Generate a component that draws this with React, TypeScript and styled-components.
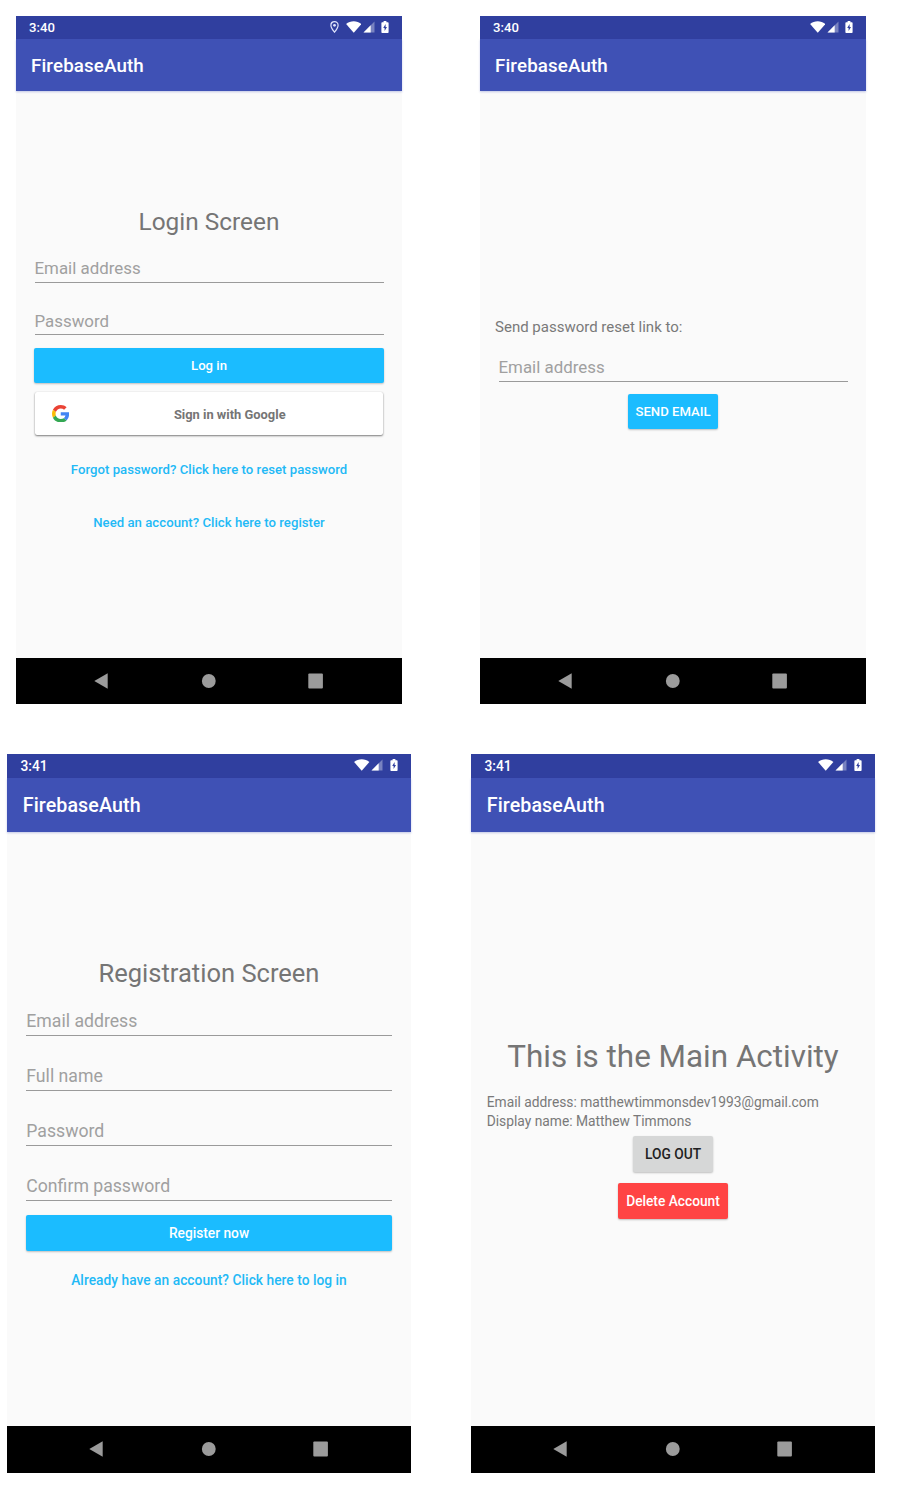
import React from "react";
import styled, { createGlobalStyle, css } from "styled-components";

const GlobalStyle = createGlobalStyle`
  * { box-sizing: border-box; }
  html, body { margin: 0; background: #fff; }
  body { font-family: Roboto, "Liberation Sans", sans-serif; }
`;

const Page = styled.main`
  width: 898px;
  height: 1493px;
  padding-top: 16px;
  overflow: hidden;
  background: #fff;
`;

const Row = styled.div<{ $left: number; $gap: number; $top?: number }>`
  display: flex;
  gap: ${(p) => p.$gap}px;
  padding-left: ${(p) => p.$left}px;
  margin-top: ${(p) => p.$top ?? 0}px;
`;

type Size = "small" | "large";

const dims = {
  small: { dp: 0.9385, width: 386, height: 687.5, status: 23, bar: 52, nav: 45.2, navGap: 107, edge: 13 },
  large: { dp: 0.982, width: 404, height: 718.7, status: 23.5, bar: 54.5, nav: 46.7, navGap: 112, edge: 13.5 },
};

const Device = styled.section<{ $size: Size }>`
  --dp: ${(p) => dims[p.$size].dp}px;
  display: flex;
  flex-direction: column;
  width: ${(p) => dims[p.$size].width}px;
  height: ${(p) => dims[p.$size].height}px;
  background: #fafafa;
`;

const StatusBar = styled.div<{ $size: Size }>`
  flex: none;
  display: flex;
  align-items: center;
  justify-content: space-between;
  height: ${(p) => dims[p.$size].status}px;
  padding: 0 ${(p) => dims[p.$size].edge}px;
  background: #303f9f;
  color: #fff;
  font-size: calc(14 * var(--dp));
  font-weight: 500;
`;

const StatusIcons = styled.div`
  display: flex;
  align-items: center;
  padding-bottom: 1px;
`;

const Glyph = styled.svg<{ $w: number; $h: number; $ml?: number }>`
  display: block;
  width: ${(p) => p.$w}px;
  height: ${(p) => p.$h}px;
  margin-left: ${(p) => p.$ml ?? 0}px;
`;

const AppBar = styled.header<{ $size: Size }>`
  flex: none;
  display: flex;
  align-items: center;
  height: ${(p) => dims[p.$size].bar}px;
  padding-top: 2px;
  padding-left: calc(16 * var(--dp));
  background: #3f51b5;
  color: #fff;
  font-size: calc(20 * var(--dp));
  font-weight: 500;
  letter-spacing: 0.12px;
  box-shadow: 0 1px 2px rgba(63, 81, 181, 0.3);
`;

const Body = styled.div`
  flex: 1;
  min-height: 0;
  display: flex;
  flex-direction: column;
`;

const NavBar = styled.nav<{ $size: Size }>`
  flex: none;
  display: flex;
  align-items: center;
  justify-content: center;
  height: ${(p) => dims[p.$size].nav}px;
  background: #000;
`;

const NavSlot = styled.span<{ $size: Size }>`
  display: flex;
  justify-content: center;
  width: ${(p) => dims[p.$size].navGap}px;
`;

const Heading = styled.h1<{ $top: number; $sp: number; $h: number }>`
  margin: ${(p) => p.$top}px 0 0;
  height: ${(p) => p.$h}px;
  line-height: ${(p) => p.$h}px;
  font-size: calc(${(p) => p.$sp} * var(--dp));
  font-weight: 400;
  text-align: center;
  white-space: nowrap;
  color: #757575;
`;

const Field = styled.div<{ $top: number; $h: number; $left?: number; $right?: number }>`
  margin: ${(p) => p.$top}px ${(p) => p.$right ?? 18.5}px 0 ${(p) => p.$left ?? 18.5}px;
  height: ${(p) => p.$h}px;
  padding-top: 2px;
  line-height: 20px;
  border-bottom: 1.5px solid #9a9a9a;
  font-size: calc(18 * var(--dp));
  color: #a0a0a0;
`;

const Caption = styled.p<{ $top: number; $sp: number; $h: number }>`
  margin: ${(p) => p.$top}px 0 0 calc(16 * var(--dp));
  height: ${(p) => p.$h}px;
  line-height: ${(p) => p.$h}px;
  font-size: calc(${(p) => p.$sp} * var(--dp));
  white-space: nowrap;
  color: #797979;
`;

const tones = {
  primary: css`background: #1bbcff; color: #fff;`,
  neutral: css`background: #d6d7d7; color: #212121;`,
  danger: css`background: #ff4444; color: #fff;`,
};

const Button = styled.button<{ $tone: keyof typeof tones; $top: number; $h: number; $w: number }>`
  display: flex;
  align-items: center;
  justify-content: center;
  align-self: center;
  flex: none;
  margin: ${(p) => p.$top}px 0 0;
  padding: 0;
  width: ${(p) => p.$w}px;
  height: ${(p) => p.$h}px;
  border: 0;
  border-radius: 2px;
  font: 500 calc(14 * var(--dp)) Roboto, sans-serif;
  white-space: nowrap;
  box-shadow: 0 1px 2px rgba(0, 0, 0, 0.24);
  ${(p) => tones[p.$tone]}
`;

const GoogleButton = styled.button`
  display: flex;
  align-items: center;
  align-self: center;
  flex: none;
  width: 348px;
  height: 43px;
  margin: 9.5px 0 0;
  padding: 0 8px 0 16.5px;
  border: 0;
  border-radius: 2px;
  background: #fff;
  color: #757575;
  font: 700 12.9px Roboto, sans-serif;
  box-shadow: 0 1px 2px rgba(0, 0, 0, 0.5), 0 0 1px rgba(0, 0, 0, 0.15);
`;

const GoogleLabel = styled.span`
  flex: 1;
  padding: 2px 0 0 15.5px;
  text-align: center;
`;

const TextLink = styled.a<{ $top: number }>`
  display: block;
  margin-top: ${(p) => p.$top}px;
  height: 18px;
  line-height: 18px;
  font-size: calc(14 * var(--dp));
  font-weight: 500;
  letter-spacing: 0.04px;
  text-align: center;
  white-space: nowrap;
  color: #22b9f6;
`;

const PinIcon = () => (
  <Glyph $w={9} $h={12} viewBox="0 0 9 12">
    <path d="M4.5.7C2.4.7.9 2.2.9 4.2c0 2.5 3.6 7 3.6 7s3.6-4.5 3.6-7C8.1 2.200 6.600.7 4.500.7Z" fill="none" stroke="#dfe3fb" strokeWidth="1.200" />
    <circle cx="4.500" cy="4.300" r="1.400" fill="#dfe3fb" />
  </Glyph>
);

const WifiIcon = ({ ml = 0 }: { ml?: number }) => (
  <Glyph $w={15.5} $h={12} $ml={ml} viewBox="0 0 15.5 12">
    <path d="M.1 3.100C2.200 1.300 4.800.3 7.750.3s5.500 1 7.600 2.800L7.750 11.800Z" fill="#fff" />
  </Glyph>
);

const SignalIcon = () => (
  <Glyph $w={12} $h={12} $ml={1.5} viewBox="0 0 12 12">
    <path d="M11.500.5V11.500H.5Z" fill="#fff" opacity=".35" />
    <path d="M7.700 4.300v7.200H.5Z" fill="#fff" />
  </Glyph>
);

const BatteryIcon = () => (
  <Glyph $w={8} $h={12} $ml={6.5} viewBox="0 0 8 12">
    <path d="M2.600 0h2.800v1.200h1.400q.8 0 .8.8v9.200q0 .8-.8.8H1.200q-.8 0-.8-.8V2q0-.8.8-.8h1.400Z" fill="#fff" />
    <path d="M4.600 3 2.200 7h1.400v3L6 6H4.600Z" fill="#303f9f" />
  </Glyph>
);

const GoogleIcon = () => (
  <Glyph $w={17.5} $h={17.5} viewBox="0 0 48 48">
    <path fill="#EA4335" d="M24 9.500c3.540 0 6.710 1.220 9.210 3.600l6.850-6.850C35.900 2.380 30.470 0 24 0 14.620 0 6.510 5.380 2.560 13.220l7.980 6.190C12.430 13.720 17.740 9.500 24 9.500z" />
    <path fill="#4285F4" d="M46.980 24.550c0-1.570-.15-3.090-.38-4.550H24v9.020h12.940c-.58 2.960-2.260 5.480-4.780 7.180l7.730 6c4.510-4.180 7.090-10.360 7.090-17.650z" />
    <path fill="#FBBC05" d="M10.530 28.590c-.48-1.450-.76-2.990-.76-4.590s.27-3.140.76-4.590l-7.980-6.190C.92 16.460 0 20.120 0 24c0 3.880.92 7.540 2.560 10.780l7.970-6.190z" />
    <path fill="#34A853" d="M24 48c6.480 0 11.930-2.130 15.890-5.810l-7.730-6c-2.150 1.450-4.920 2.300-8.160 2.300-6.260 0-11.570-4.220-13.470-9.910l-7.980 6.190C6.510 42.620 14.620 48 24 48z" />
  </Glyph>
);

const Navigation = ({ size }: { size: Size }) => (
  <NavBar $size={size}>
    <NavSlot $size={size}>
      <Glyph $w={16} $h={16} viewBox="0 0 16 16">
        <path d="M.3 8 13.700.2v15.600Z" fill="#9b9b9b" />
      </Glyph>
    </NavSlot>
    <NavSlot $size={size}>
      <Glyph $w={16} $h={16} viewBox="0 0 16 16">
        <circle cx="7.800" cy="8" r="6.900" fill="#9b9b9b" />
      </Glyph>
    </NavSlot>
    <NavSlot $size={size}>
      <Glyph $w={16} $h={16} viewBox="0 0 16 16">
        <rect x=".3" y=".5" width="14.600" height="15" rx="1" fill="#9b9b9b" />
      </Glyph>
    </NavSlot>
  </NavBar>
);

type PhoneProps = { size: Size; time: string; located?: boolean; children: React.ReactNode };

const Phone = ({ size, time, located, children }: PhoneProps) => (
  <Device $size={size}>
    <StatusBar $size={size}>
      <span>{time}</span>
      <StatusIcons>
        {located && <PinIcon />}
        <WifiIcon ml={7} />
        <SignalIcon />
        <BatteryIcon />
      </StatusIcons>
    </StatusBar>
    <AppBar $size={size}>FirebaseAuth</AppBar>
    <Body>{children}</Body>
    <Navigation size={size} />
  </Device>
);

export default function App() {
  return (
    <>
      <GlobalStyle />
      <Page>
        <Row $left={16} $gap={78}>
          <Phone size="small" time="3:40" located>
            <Heading $top={116} $sp={26} $h={30}>Login Screen</Heading>
            <Field $top={19} $h={26.5}>Email address</Field>
            <Field $top={26} $h={26.5}>Password</Field>
            <Button $tone="primary" $top={13} $h={34.5} $w={350}>Log in</Button>
            <GoogleButton>
              <GoogleIcon />
              <GoogleLabel>Sign in with Google</GoogleLabel>
            </GoogleButton>
            <TextLink $top={26}>Forgot password? Click here to reset password</TextLink>
            <TextLink $top={35}>Need an account? Click here to register</TextLink>
          </Phone>
          <Phone size="small" time="3:40">
            <Caption $top={226} $sp={16} $h={20}>Send password reset link to:</Caption>
            <Field $top={18} $h={26.5}>Email address</Field>
            <Button $tone="primary" $top={12.5} $h={34.5} $w={90}>SEND EMAIL</Button>
          </Phone>
        </Row>
        <Row $left={7} $gap={60} $top={50.5}>
          <Phone size="large" time="3:41">
            <Heading $top={125.5} $sp={26} $h={31}>Registration Screen</Heading>
            <Field $top={20.5} $h={27} $left={19.3} $right={19.3}>Email address</Field>
            <Field $top={28} $h={27} $left={19.3} $right={19.3}>Full name</Field>
            <Field $top={28} $h={27} $left={19.3} $right={19.3}>Password</Field>
            <Field $top={28} $h={27} $left={19.3} $right={19.3}>Confirm password</Field>
            <Button $tone="primary" $top={14} $h={36} $w={366}>Register now</Button>
            <TextLink $top={19.8}>Already have an account? Click here to log in</TextLink>
          </Phone>
          <Phone size="large" time="3:41">
            <Heading $top={205.5} $sp={32} $h={38}>This is the Main Activity</Heading>
            <Caption $top={17.5} $sp={14.06} $h={19}>Email address: matthewtimmonsdev1993@gmail.com</Caption>
            <Caption $top={0} $sp={14.06} $h={19}>Display name: Matthew Timmons</Caption>
            <Button $tone="neutral" $top={4.7} $h={36} $w={80}>LOG OUT</Button>
            <Button $tone="danger" $top={11.3} $h={36} $w={110}>Delete Account</Button>
          </Phone>
        </Row>
      </Page>
    </>
  );
}
